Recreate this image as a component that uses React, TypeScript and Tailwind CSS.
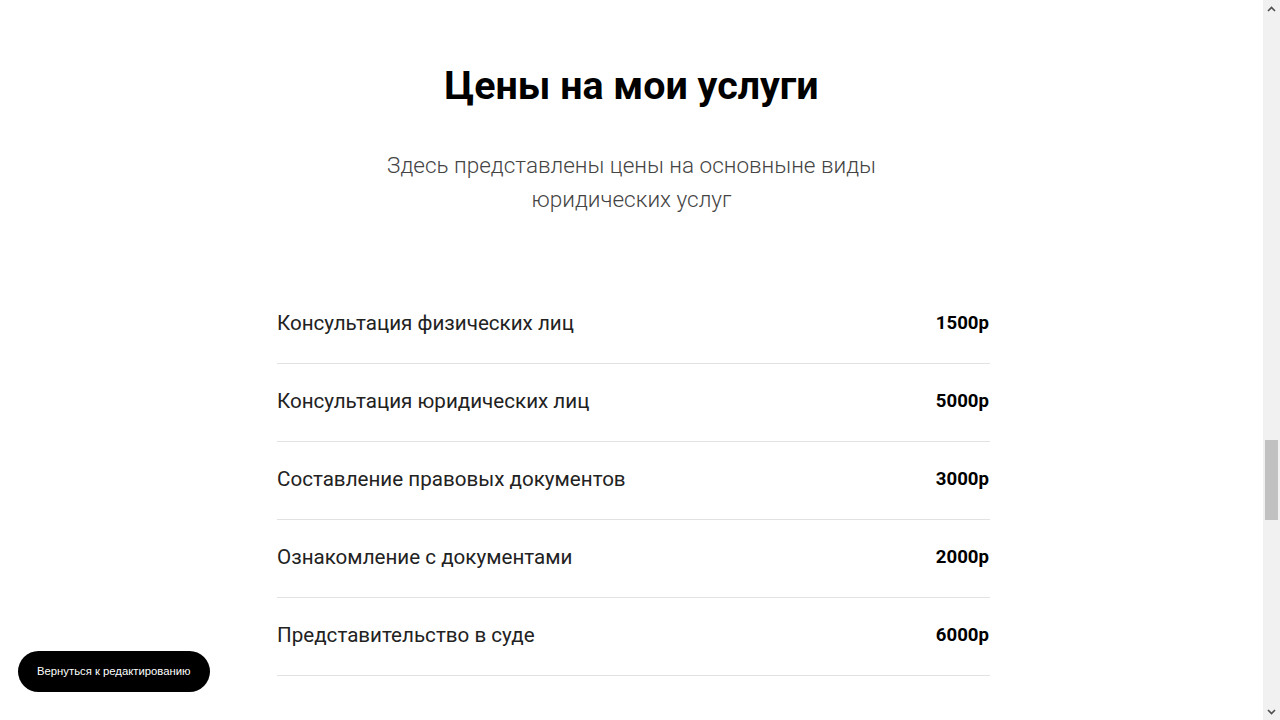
import React from "react";

const PRICES = [
    { name: "Консультация физических лиц", price: "1500р" },
    { name: "Консультация юридических лиц", price: "5000р" },
    { name: "Составление правовых документов", price: "3000р" },
    { name: "Ознакомление с документами", price: "2000р" },
    { name: "Представительство в суде", price: "6000р" },
];

function Scrollbar() {
    return (
        <div className="w-[17px] h-screen flex flex-col bg-[#f1f1f1] shrink-0">
            {/* up arrow */}
            <div className="h-[17px] flex items-center justify-center">
                <svg width="9" height="6" viewBox="0 0 9 6">
                    <path d="M1 5 L4.5 1.5 L8 5" fill="none" stroke="#505050" strokeWidth="1.6" />
                </svg>
            </div>
            <div className="flex-1 flex flex-col">
                <div className="h-[423px]" />
                <div className="h-[80px] mx-[2px] bg-[#c1c1c1]" />
            </div>
            {/* down arrow */}
            <div className="h-[17px] flex items-center justify-center">
                <svg width="9" height="6" viewBox="0 0 9 6">
                    <path d="M1 1 L4.5 4.5 L8 1" fill="none" stroke="#505050" strokeWidth="1.6" />
                </svg>
            </div>
        </div>
    );
}

export default function App() {
    return (
        <div className="h-screen w-full flex overflow-hidden bg-white" style={{ fontFamily: "Roboto, 'Liberation Sans', sans-serif" }}>
            <main className="flex-1 min-w-0 flex flex-col items-center pt-[62px]">
                {/* Heading */}
                <h2 className="text-[39.4px] leading-[48px] font-bold text-black text-center">
                    Цены на мои услуги
                </h2>
                <p className="mt-[38px] max-w-[530px] text-[22.5px] leading-[34px] font-light text-[#444] text-center">
                    Здесь представлены цены на основныне виды юридических услуг
                </p>

                {/* Price list */}
                <div className="mt-[70px] w-[713px] ml-[4px] flex flex-col">
                    {PRICES.map(row => (
                        <div key={row.name}
                            className="h-[78px] pb-[3px] flex items-center justify-between border-b border-[#e2e2e2]">
                            <span className="text-[20.6px] text-[#222]">{row.name}</span>
                            <span className="pt-[2px] pr-[1px] text-[18.6px] font-bold text-black">{row.price}</span>
                        </div>
                    ))}
                </div>
            </main>

            <Scrollbar />

            {/* Back to editor button */}
            <button className="fixed left-[18px] bottom-[28px] h-[41px] px-[19px] rounded-full bg-black text-white text-[11.3px]"
                style={{ fontFamily: "'Liberation Sans', Arial, sans-serif" }}>
                Вернуться к редактированию
            </button>
        </div>
    );
}
